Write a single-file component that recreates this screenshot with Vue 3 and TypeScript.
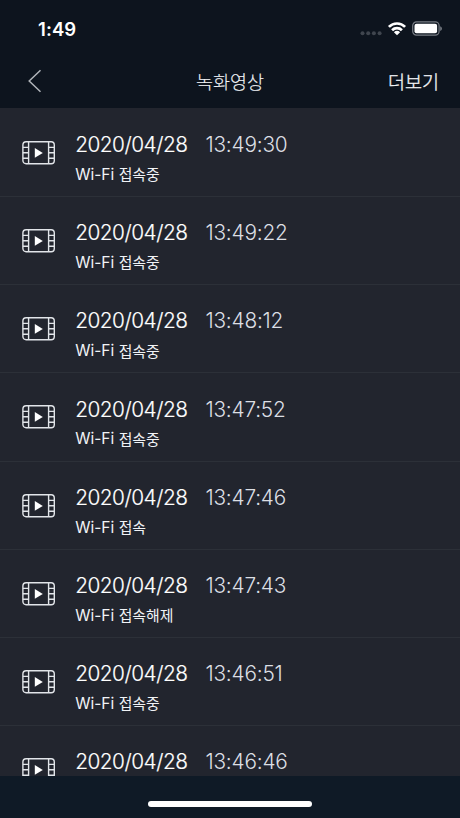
<script setup lang="ts">
interface Recording {
  date: string
  time: string
  event?: string
}

const recordings: Recording[] = [
  { date: '2020/04/28', time: '13:49:30', event: '접속중' },
  { date: '2020/04/28', time: '13:49:22', event: '접속중' },
  { date: '2020/04/28', time: '13:48:12', event: '접속중' },
  { date: '2020/04/28', time: '13:47:52', event: '접속중' },
  { date: '2020/04/28', time: '13:47:46', event: '접속' },
  { date: '2020/04/28', time: '13:47:43', event: '접속해제' },
  { date: '2020/04/28', time: '13:46:51', event: '접속중' },
  { date: '2020/04/28', time: '13:46:46' },
]
</script>

<template>
  <div class="screen">
    <header class="top">
      <div class="status">
        <span class="clock">1:49</span>
        <div class="indicators">
          <svg class="cell" width="22" height="18" viewBox="0 0 22 18">
            <circle v-for="n in 4" :key="n" :cx="n * 5.7 - 3.2" cy="13.2" r="2" />
          </svg>
          <svg class="wifi" width="20" height="18" viewBox="0 0 20 18">
            <path d="M1.9 6.9a11.4 11.4 0 0 1 16.2 0" />
            <path d="M5.1 10.2a6.9 6.9 0 0 1 9.8 0" />
            <path class="dot" d="M6.9 12.2a4.5 4.5 0 0 1 6.2 0L10 15.3z" />
          </svg>
          <svg class="battery" width="31" height="18" viewBox="0 0 31 18">
            <rect class="shell" x="0.7" y="1.9" width="26.4" height="13.2" rx="3.8" />
            <rect class="charge" x="2.5" y="3.7" width="22.6" height="9.6" rx="2" />
            <path class="cap" d="M28.2 6.3c2.3 1 2.3 3.8 0 4.8z" />
          </svg>
        </div>
      </div>
      <nav class="nav">
        <button class="back" type="button" aria-label="뒤로">
          <svg width="16" height="24" viewBox="0 0 16 24">
            <path d="M13.5 1.2 2.2 12l11.3 10.8" />
          </svg>
        </button>
        <h1 class="title">녹화영상</h1>
        <button class="more" type="button">더보기</button>
      </nav>
    </header>

    <ul class="list">
      <li v-for="item in recordings" :key="item.time" class="row">
        <svg class="film" width="34" height="26" viewBox="0 0 34 26">
          <rect x="0.9" y="1.8" width="31.4" height="22" rx="3.2" />
          <path d="M6.6 1.8v22M26.6 1.8v22M.9 7.4h5.7M.9 12.8h5.7M.9 18.2h5.7M26.6 7.4h5.7M26.6 12.8h5.7M26.6 18.2h5.7" />
          <path class="play" d="M12.8 8.1v9.6l8-4.8z" />
        </svg>
        <div class="info">
          <div class="stamp">
            <span class="date">{{ item.date }}</span>
            <span class="time">{{ item.time }}</span>
          </div>
          <div v-if="item.event" class="event">
            <span class="net">Wi-Fi</span><span class="state">{{ item.event }}</span>
          </div>
        </div>
      </li>
    </ul>

    <footer class="bottom"><span class="home"></span></footer>
  </div>
</template>

<style>
body {
  margin: 0;
  background: #0f1a26;
}
</style>

<style scoped>
.screen {
  display: flex;
  flex-direction: column;
  width: 460px;
  height: 818px;
  overflow: hidden;
  background: #22252e;
  color: #f1f3f6;
  font-family: Inter, "Noto Sans CJK KR", sans-serif;
}
.top {
  flex: none;
  height: 108px;
  background: #0d141e;
}
.status {
  display: flex;
  justify-content: space-between;
  height: 54px;
  padding: 0 17px 0 38px;
}
.clock {
  padding-top: 17px;
  font-size: 18.5px;
  line-height: 24px;
  font-weight: 600;
  letter-spacing: 0.1px;
  color: #fff;
}
.indicators {
  display: flex;
  padding-top: 20px;
}
.cell { fill: #3f454e; margin-right: 5px; }
.wifi { fill: none; stroke: #fff; stroke-width: 2.7; margin-right: 5px; }
.wifi .dot { fill: #fff; stroke: none; }
.shell { fill: none; stroke: #777c84; stroke-width: 1.2; }
.charge { fill: #fff; }
.cap { fill: #777c84; }
.nav {
  display: grid;
  grid-template-columns: 1fr auto 1fr;
  align-items: center;
  height: 54px;
  padding: 0 21px 0 27px;
  box-sizing: border-box;
}
button {
  margin: 0;
  padding: 0;
  border: 0;
  background: none;
  color: inherit;
  font-family: "Noto Sans CJK KR", sans-serif;
}
.back { justify-self: start; height: 24px; }
.back svg { display: block; fill: none; stroke: #b0b4b9; stroke-width: 1.5; }
.title {
  margin: 0 6px 0 0;
  font: 300 18.5px/28px "Noto Sans CJK KR", sans-serif;
  -webkit-text-stroke: 0.15px currentColor;
}
.more {
  justify-self: end;
  font-size: 18.5px;
  line-height: 28px;
  font-weight: 300;
  -webkit-text-stroke: 0.35px currentColor;
}
.list {
  flex: 1;
  min-height: 0;
  margin: 0;
  padding: 0.8px 0 0;
  overflow: hidden;
  list-style: none;
}
.row {
  display: flex;
  height: 88.2px;
  padding: 0 22px;
  border-bottom: 1px solid #2c3038;
  box-sizing: border-box;
}
.film {
  flex: none;
  margin: 31.1px 19.2px 0 0;
  fill: none;
  stroke: #e2e5e9;
  stroke-width: 1.4;
}
.film .play { fill: #fff; stroke: none; }
.info { padding-top: 22.2px; }
.stamp {
  display: flex;
  font-size: 20.8px;
  line-height: 28px;
  white-space: nowrap;
}
.date {
  width: 130.3px;
  font-weight: 300;
  letter-spacing: -0.48px;
  color: #fff;
  -webkit-text-stroke: 0.18px currentColor;
}
.time { font-weight: 300; letter-spacing: -0.2px; color: #dcdfe4; }
.event {
  display: flex;
  gap: 4.4px;
  padding-top: 4.2px;
  font-size: 15.5px;
  line-height: 22px;
}
.net { padding-top: 0.6px; }
.state {
  font-family: "Noto Sans CJK KR", sans-serif;
  font-size: 14.9px;
}
.bottom {
  display: flex;
  flex: none;
  justify-content: center;
  height: 42px;
  background: #0f1a26;
}
.home {
  width: 164px;
  height: 6px;
  margin-top: 25px;
  border-radius: 3px;
  background: #fff;
}
</style>
